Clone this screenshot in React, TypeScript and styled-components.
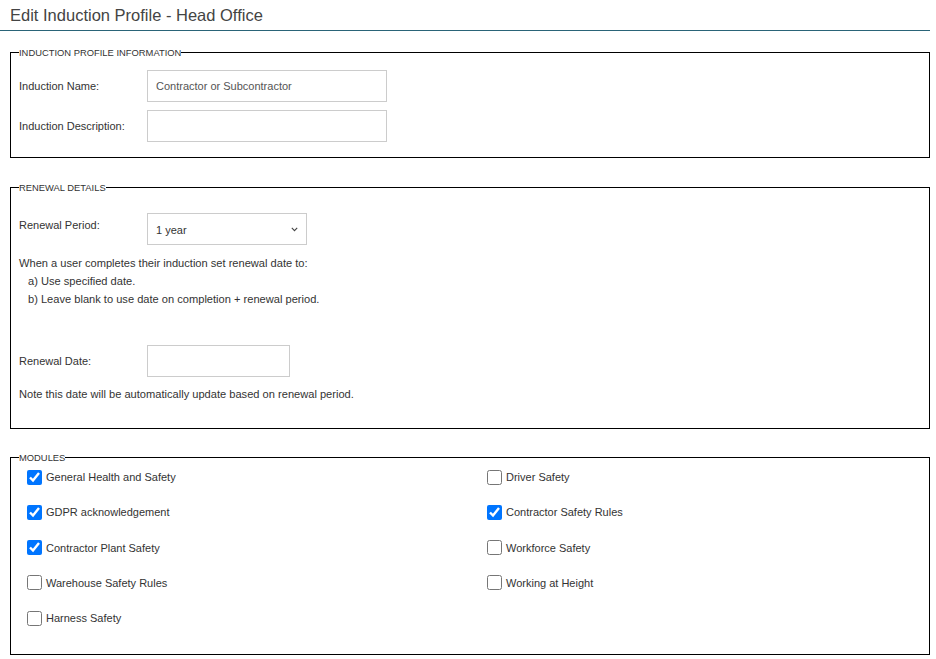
import React from "react";
import styled, { createGlobalStyle } from "styled-components";

const GlobalStyle = createGlobalStyle`
  html, body { margin: 0; padding: 0; background: #fff; }
  body {
    font-family: "Liberation Sans", Arial, sans-serif;
    font-size: 11px;
    color: #333;
  }
  * { box-sizing: border-box; }
`;

const Page = styled.div`
  width: 930px;
  padding-bottom: 4px;
`;

const Title = styled.h1`
  margin: 0;
  height: 31px;
  padding: 5px 0 0 10px;
  font-size: 16.5px;
  font-weight: normal;
  line-height: 20px;
  color: #444;
  border-bottom: 1px solid #2a6478;
`;

const Section = styled.fieldset<{ $top: number; $pt: number; $pb: number }>`
  margin: ${(p) => p.$top}px 0 0 10px;
  padding: ${(p) => p.$pt}px 8px ${(p) => p.$pb}px 8px;
  border: 1px solid #000;
  min-width: 0;
`;

const Legend = styled.legend`
  padding: 0;
  font-size: 9.4px;
  line-height: 11px;
  color: #333;
  text-transform: uppercase;
`;

const Rows = styled.div`
  display: flex;
  flex-direction: column;
  gap: 8px;
`;

const FieldRow = styled.div<{ $align?: string; $mt?: number }>`
  display: flex;
  align-items: ${(p) => p.$align || "center"};
  margin-top: ${(p) => p.$mt || 0}px;
`;

const Label = styled.label<{ $pt?: number }>`
  width: 128px;
  flex: none;
  padding-top: ${(p) => p.$pt || 0}px;
  font-size: 11px;
  line-height: 14px;
  color: #333;
`;

const TextInput = styled.input<{ $w: number }>`
  width: ${(p) => p.$w}px;
  height: 32px;
  margin: 0;
  padding: 0 8px;
  border: 1px solid #ccc;
  border-radius: 0;
  font-family: "Liberation Sans", Arial, sans-serif;
  font-size: 11px;
  color: #555;
  background: #fff;
  outline: none;
`;

const SelectWrap = styled.div<{ $w: number }>`
  position: relative;
  width: ${(p) => p.$w}px;
  height: 32px;
`;

const Select = styled.select`
  appearance: none;
  -webkit-appearance: none;
  width: 100%;
  height: 100%;
  margin: 0;
  padding: 2px 8px 0 8px;
  border: 1px solid #ccc;
  border-radius: 0;
  background: #fff;
  font-family: "Liberation Sans", Arial, sans-serif;
  font-size: 11px;
  color: #333;
  outline: none;
`;

const Chevron = styled.svg`
  position: absolute;
  right: 9px;
  top: 14px;
  width: 7px;
  height: 5px;
  pointer-events: none;
`;

const Note = styled.div<{ $mt: number }>`
  margin-top: ${(p) => p.$mt}px;
  line-height: 18px;
  font-size: 11.1px;
  color: #333;
`;

const Indented = styled.div`
  padding-left: 9px;
`;

const CheckGrid = styled.div`
  display: grid;
  grid-template-columns: 460px 1fr;
  grid-auto-rows: 20px;
  row-gap: 15.25px;
  padding-left: 8px;
  margin-top: 4px;
`;

const CheckItem = styled.label<{ $col: number; $row: number }>`
  grid-column: ${(p) => p.$col};
  grid-row: ${(p) => p.$row};
  display: flex;
  align-items: center;
  gap: 4px;
  font-size: 11px;
  color: #333;
`;

const Box = styled.input`
  width: 15px;
  height: 15px;
  margin: 0;
  flex: none;
  accent-color: #0075ff;
`;

const modules: { name: string; checked: boolean; col: number; row: number }[] = [
  { name: "General Health and Safety", checked: true, col: 1, row: 1 },
  { name: "GDPR acknowledgement", checked: true, col: 1, row: 2 },
  { name: "Contractor Plant Safety", checked: true, col: 1, row: 3 },
  { name: "Warehouse Safety Rules", checked: false, col: 1, row: 4 },
  { name: "Harness Safety", checked: false, col: 1, row: 5 },
  { name: "Driver Safety", checked: false, col: 2, row: 1 },
  { name: "Contractor Safety Rules", checked: true, col: 2, row: 2 },
  { name: "Workforce Safety", checked: false, col: 2, row: 3 },
  { name: "Working at Height", checked: false, col: 2, row: 4 },
];

export default function App() {
  return (
    <Page>
      <GlobalStyle />
      <Title>Edit Induction Profile - Head Office</Title>

      <Section $top={16} $pt={12} $pb={15}>
        <Legend>Induction Profile Information</Legend>
        <Rows>
          <FieldRow>
            <Label>Induction Name:</Label>
            <TextInput $w={240} defaultValue="Contractor or Subcontractor" />
          </FieldRow>
          <FieldRow>
            <Label>Induction Description:</Label>
            <TextInput $w={240} defaultValue="" />
          </FieldRow>
        </Rows>
      </Section>

      <Section $top={24} $pt={20} $pb={25}>
        <Legend>Renewal Details</Legend>
        <FieldRow $align="flex-start">
          <Label $pt={5}>Renewal Period:</Label>
          <SelectWrap $w={160}>
            <Select defaultValue="1 year">
              <option>1 year</option>
              <option>2 years</option>
              <option>3 years</option>
            </Select>
            <Chevron viewBox="0 0 7 5">
              <path d="M0.8 0.8 L3.5 3.6 L6.2 0.8" fill="none" stroke="#444" strokeWidth="1.1" />
            </Chevron>
          </SelectWrap>
        </FieldRow>
        <Note $mt={9}>
          When a user completes their induction set renewal date to:
          <Indented>a) Use specified date.</Indented>
          <Indented>b) Leave blank to use date on completion + renewal period.</Indented>
        </Note>
        <FieldRow $mt={37}>
          <Label>Renewal Date:</Label>
          <TextInput $w={143} defaultValue="" />
        </FieldRow>
        <Note $mt={8}>Note this date will be automatically update based on renewal period.</Note>
      </Section>

      <Section $top={23} $pt={0} $pb={26}>
        <Legend>Modules</Legend>
        <CheckGrid>
          {modules.map((m) => (
            <CheckItem key={m.name} $col={m.col} $row={m.row}>
              <Box type="checkbox" defaultChecked={m.checked} />
              {m.name}
            </CheckItem>
          ))}
        </CheckGrid>
      </Section>
    </Page>
  );
}
